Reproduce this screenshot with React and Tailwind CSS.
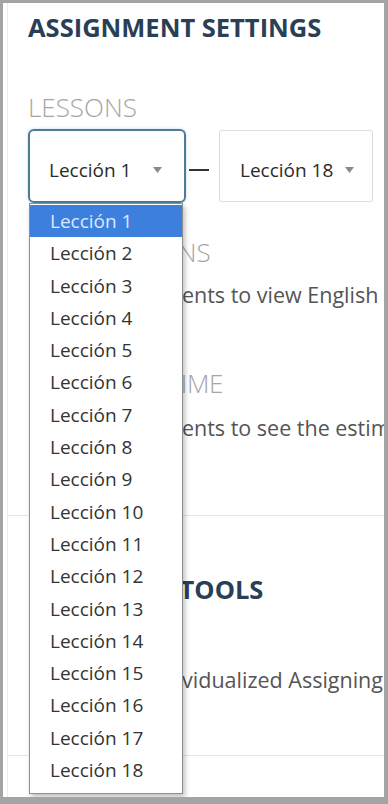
import React from "react";

const lessons = Array.from({ length: 18 }, (_, i) => `Lección ${i + 1}`);

function Caret({ className = "" }) {
  return (
    <svg width="9" height="6" viewBox="0 0 9 6" className={className}>
      <path d="M0 0 L9 0 L4.5 6 Z" fill="#8a8a8a" />
    </svg>
  );
}

function Toggle({ gap = "mr-[6px]" }) {
  return (
    <div className={`ml-[6px] w-[38px] h-[22px] rounded-full bg-[#cfd8dc] flex items-center px-[3px] shrink-0 ${gap}`}>
      <div className="w-[16px] h-[16px] rounded-full bg-white" />
    </div>
  );
}

export default function App() {
  const font = { fontFamily: '"Open Sans", "Noto Sans", Arial, sans-serif' };
  return (
    <div
      className="w-[388px] h-[804px] bg-[#a4a4a4] pt-[3px] pl-[3px] pr-[4px] pb-[7px]"
      style={font}
    >
      <div className="h-full bg-white overflow-hidden flex">
        <div className="w-[5px] shrink-0 border-r border-[#ececec]" />
        <div className="flex-1 flex flex-col min-w-0">
          <div className="pl-[20px] flex flex-col">
            <div className="mt-[11px] h-[26px] leading-[26px] text-[25.5px] font-bold text-[#283f55] whitespace-nowrap">
              ASSIGNMENT SETTINGS
            </div>
            <div className="mt-[54px] h-[26px] leading-[26px] text-[26px] font-light text-[#a6a6a6] whitespace-nowrap">
              LESSONS
            </div>

            <div className="mt-[9px] flex items-center relative">
              <div className="relative">
                <div className="w-[158px] h-[74px] border-2 border-[#4c7b9a] rounded-[6px] flex items-center justify-between pl-[19px] pr-[22px] pt-[8px] shadow-[0_0_3px_rgba(76,123,154,0.35)]">
                  <span className="text-[19px] text-[#2a2a2a] whitespace-nowrap">Lección 1</span>
                  <Caret />
                </div>
                <div className="absolute left-[1px] top-[74px] w-[154px] bg-white border border-[#8e8e8e] shadow-[2px_3px_5px_rgba(0,0,0,0.25)] pt-[1px] pb-[7px] z-10">
                  {lessons.map((l, i) => (
                    <div
                      key={l}
                      className={
                        i === 0
                          ? "h-[32.3px] leading-[32.3px] pl-[20px] text-[19px] bg-[#3d7fdc] text-[#dbe9ff] whitespace-nowrap"
                          : "h-[32.3px] leading-[32.3px] pl-[20px] text-[19px] text-[#333] whitespace-nowrap"
                      }
                    >
                      {l}
                    </div>
                  ))}
                </div>
              </div>
              <div className="w-[20px] h-[1.5px] bg-[#333] mx-[3px] mt-[8px]" />
              <div className="ml-[7px] w-[154px] h-[72px] border border-[#dcdcdc] rounded-[3px] flex items-center justify-between pl-[20px] pr-[18px] pt-[8px]">
                <span className="text-[19px] text-[#2a2a2a] whitespace-nowrap">Lección 18</span>
                <Caret />
              </div>
            </div>

            <div className="mt-[36px] pl-[3px] h-[26px] leading-[26px] text-[26px] font-light text-[#a6a6a6] whitespace-nowrap">
              TRANSLATIONS
            </div>
            <div className="mt-[14px] h-[32px] flex items-center whitespace-nowrap">
              <Toggle />
              <span className="text-[21.5px] text-[#555]">Allow students to view English translations</span>
            </div>

            <div className="mt-[59px] pl-[3px] h-[26px] leading-[26px] text-[26px] font-light text-[#a6a6a6] whitespace-nowrap tracking-[-0.35px]">
              ESTIMATED TIME
            </div>
            <div className="mt-[16px] h-[32px] flex items-center whitespace-nowrap">
              <Toggle />
              <span className="text-[21.5px] text-[#555]">Allow students to see the estimated time</span>
            </div>
          </div>

          <div className="mt-[71px] h-px bg-[#e6e6e6]" />

          <div className="pl-[20px] flex flex-col">
            <div className="mt-[60px] pl-[4px] h-[26px] leading-[26px] text-[25.5px] font-bold text-[#283f55] whitespace-nowrap">
              ASSIGNING TOOLS
            </div>
            <div className="mt-[62px] h-[32px] flex items-center whitespace-nowrap">
              <Toggle gap="-mr-[1px]" />
              <span className="text-[21.5px] text-[#555]">Enable Individualized Assigning</span>
            </div>
          </div>

          <div className="mt-[59px] h-px bg-[#e6e6e6]" />
        </div>
      </div>
    </div>
  );
}
